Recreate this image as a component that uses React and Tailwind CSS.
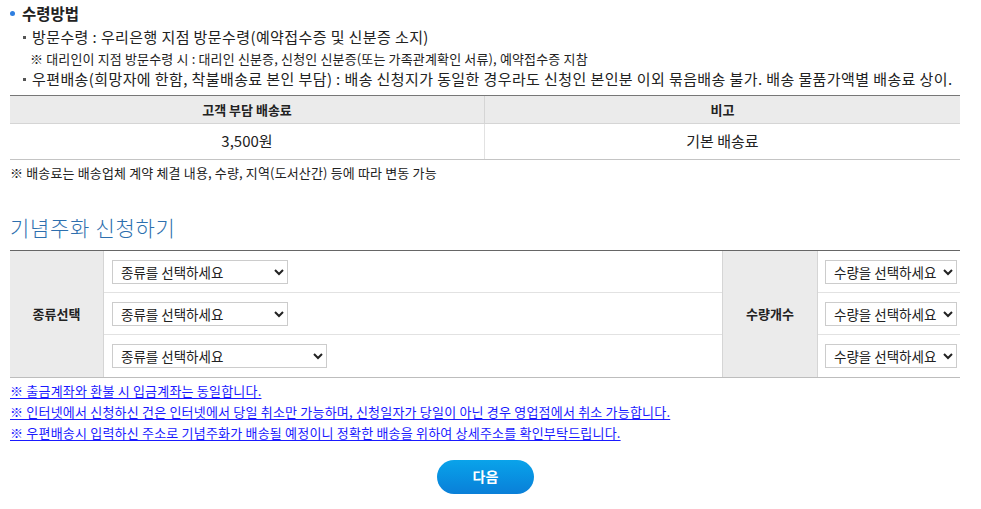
import React from "react";

const kindOptions = ["종류를 선택하세요"];
const qtyOptions = ["수량을 선택하세요", "1", "2", "3"];

const notices = [
  "※ 출금계좌와 환불 시 입금계좌는 동일합니다.",
  "※ 인터넷에서 신청하신 건은 인터넷에서 당일 취소만 가능하며, 신청일자가 당일이 아닌 경우 영업점에서 취소 가능합니다.",
  "※ 우편배송시 입력하신 주소로 기념주화가 배송될 예정이니 정확한 배송을 위하여 상세주소를 확인부탁드립니다.",
];

const SelectBox = ({ options, className = "" }) => (
  <select
    className={`h-6 border border-[#cccccc] bg-white pl-1 text-[13.5px] text-[#222] ${className}`}
    defaultValue={options[0]}
  >
    {options.map((o) => (
      <option key={o} value={o}>
        {o}
      </option>
    ))}
  </select>
);

const App = () => {
  const rowLine = "border-b border-[#e2e2e2]";

  return (
    <div
      className="w-[981px] h-[509px] bg-white text-[#222] px-[10px]"
      style={{ fontFamily: '"Noto Sans CJK KR", "Noto Sans", sans-serif' }}
    >
      {/* 수령방법 */}
      <div className="flex items-center h-[26px] pt-[1px]">
        <span className="w-[5px] h-[5px] rounded-full bg-[#2f7fe0] mr-[7px]" />
        <h3 className="text-[15.5px] font-bold leading-none">수령방법</h3>
      </div>
      <div className="pl-[10px] text-[15px] tracking-[0.4px]">
        <div className="flex items-center h-[22px]">
          <span className="w-[3px] h-[3px] bg-[#555] ml-[3px] mr-[6px]" />
          <span>방문수령 : 우리은행 지점 방문수령(예약접수증 및 신분증 소지)</span>
        </div>
        <div className="h-[20px] flex items-center">
          <span className="block ml-[10px] text-[13px] tracking-[0.15px] leading-none whitespace-nowrap">
            ※ 대리인이 지점 방문수령 시 : 대리인 신분증, 신청인 신분증(또는 가족관계확인 서류), 예약접수증 지참
          </span>
        </div>
        <div className="flex items-center h-[22px]">
          <span className="w-[3px] h-[3px] bg-[#555] ml-[3px] mr-[6px]" />
          <span className="whitespace-nowrap">
            우편배송(희망자에 한함, 착불배송료 본인 부담) : 배송 신청지가 동일한 경우라도 신청인 본인분 이외 묶음배송 불가. 배송 물품가액별 배송료 상이.
          </span>
        </div>
      </div>

      {/* 배송료 표 */}
      <div className="mt-[5px] border-t border-[#777] w-[950px]">
        <div className="grid grid-cols-2 h-[28px] bg-[#ebebeb] border-b border-[#d5d5d5] text-[13px] font-bold">
          <div className="flex items-center justify-center border-r border-[#d5d5d5]">고객 부담 배송료</div>
          <div className="flex items-center justify-center">비고</div>
        </div>
        <div className="grid grid-cols-2 h-[36px] border-b border-[#c4c4c4] text-[15px]">
          <div className="flex items-center justify-center border-r border-[#e2e2e2]">3,500원</div>
          <div className="flex items-center justify-center">기본 배송료</div>
        </div>
      </div>
      <p className="h-[26px] flex items-center text-[13px] tracking-[0.15px]">
        ※ 배송료는 배송업체 계약 체결 내용, 수량, 지역(도서산간) 등에 따라 변동 가능
      </p>

      {/* 기념주화 신청하기 */}
      <h2 className="mt-[25px] h-[34px] flex items-center text-[21px] text-[#2d6fae] font-light tracking-[0.7px]">
        기념주화 신청하기
      </h2>

      <div className="mt-[5px] w-[950px] border-t border-[#666] border-b border-b-[#bdbdbd] grid grid-cols-[94px_618px_96px_142px] grid-rows-[42px_42px_42px] text-[13px]">
        <div className="row-span-3 bg-[#ebebeb] border-r border-[#d5d5d5] flex items-center justify-center font-bold">
          종류선택
        </div>
        <div className={`flex items-center pl-[8px] ${rowLine}`}>
          <SelectBox options={kindOptions} className="w-[176px]" />
        </div>
        <div className="row-span-3 bg-[#ebebeb] border-x border-[#d5d5d5] flex items-center justify-center font-bold">
          수량개수
        </div>
        <div className={`flex items-center pl-[7px] ${rowLine}`}>
          <SelectBox options={qtyOptions} className="w-[132px]" />
        </div>
        <div className={`flex items-center pl-[8px] ${rowLine}`}>
          <SelectBox options={kindOptions} className="w-[176px]" />
        </div>
        <div className={`flex items-center pl-[7px] ${rowLine}`}>
          <SelectBox options={qtyOptions} className="w-[132px]" />
        </div>
        <div className="flex items-center pl-[8px]">
          <SelectBox options={kindOptions} className="w-[215px]" />
        </div>
        <div className="flex items-center pl-[7px]">
          <SelectBox options={qtyOptions} className="w-[132px]" />
        </div>
      </div>

      <ul className="mt-[2px] text-[13px] tracking-[0.2px]">
        {notices.map((n) => (
          <li key={n} className="h-[21.3px] flex items-center">
            <a href="#" className="text-[#1a1aff] underline underline-offset-2">
              {n}
            </a>
          </li>
        ))}
      </ul>

      <div className="flex justify-center mt-[16px] pr-[10px]">
        <button
          type="button"
          className="w-[97px] h-[34px] rounded-full bg-gradient-to-b from-[#0aa3ea] to-[#0a7fd8] text-white text-[14px] font-bold"
        >
          다음
        </button>
      </div>
    </div>
  );
};

export default App;
